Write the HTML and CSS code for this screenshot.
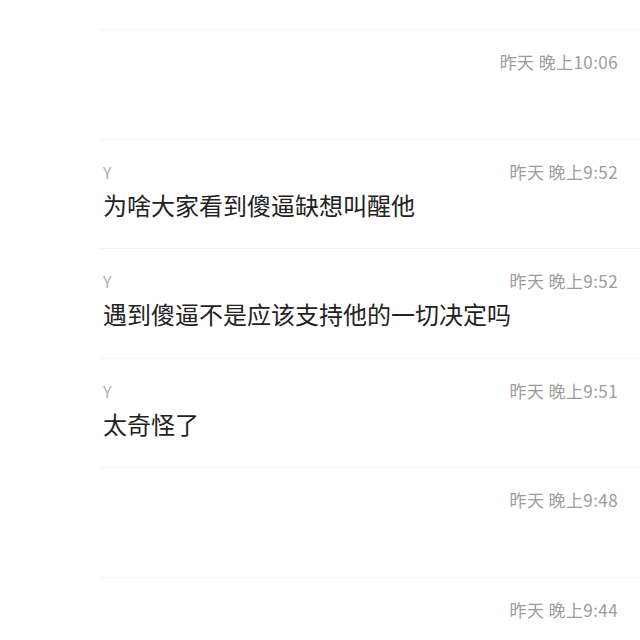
FILE: index.html
```html
<!DOCTYPE html>
<html lang="zh-CN">
<head>
    <meta charset="UTF-8">
    <meta name="viewport" content="width=device-width, initial-scale=1.0">
    <title>评论</title>
    <link rel="stylesheet" href="styles.css">
</head>
<body>
    <div class="list">
        <div class="item">
            <div class="head">
                <span class="name"></span>
                <span class="time">昨天 晚上10:06</span>
            </div>
        </div>
        <div class="item">
            <div class="head">
                <span class="name">Y</span>
                <span class="time">昨天 晚上9:52</span>
            </div>
            <div class="msg">为啥大家看到傻逼缺想叫醒他</div>
        </div>
        <div class="item">
            <div class="head">
                <span class="name">Y</span>
                <span class="time">昨天 晚上9:52</span>
            </div>
            <div class="msg">遇到傻逼不是应该支持他的一切决定吗</div>
        </div>
        <div class="item">
            <div class="head">
                <span class="name">Y</span>
                <span class="time">昨天 晚上9:51</span>
            </div>
            <div class="msg">太奇怪了</div>
        </div>
        <div class="item">
            <div class="head">
                <span class="name"></span>
                <span class="time">昨天 晚上9:48</span>
            </div>
        </div>
        <div class="item last">
            <div class="head">
                <span class="name"></span>
                <span class="time">昨天 晚上9:44</span>
            </div>
        </div>
    </div>
</body>
</html>
```

FILE: styles.css
```css
body {
    margin: 0;
    background: #fff;
    font-family: "Noto Sans CJK SC", "Noto Sans", sans-serif;
    overflow: hidden;
}

.list {
    padding-top: 29px;
    margin-left: 100px;
}

.item {
    border-top: 1px solid #f2f2f2;
    height: 108.6px;
    padding: 0 22px 0 3px;
}

.item.last {
    height: 60px;
}

.head {
    display: flex;
    justify-content: space-between;
    align-items: center;
    padding-top: 21px;
    height: 22px;
    line-height: 22px;
}

.name {
    font-size: 16px;
    color: #b0b0b0;
}

.time {
    font-size: 17px;
    color: #9c9c9c;
    letter-spacing: 0.4px;
}

.msg {
    margin-top: 6px;
    font-size: 24px;
    line-height: 32px;
    color: #222;
}
```
